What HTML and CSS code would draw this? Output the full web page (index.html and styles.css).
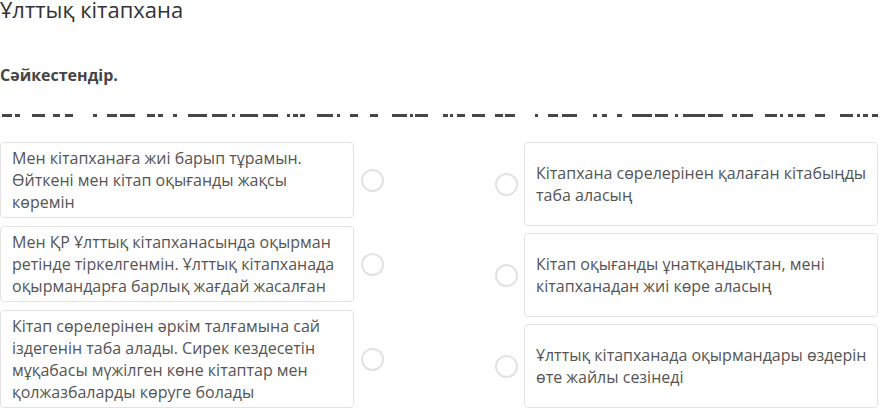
FILE: index.html
```html
<!DOCTYPE html>
<html lang="kk">
<head>
  <meta charset="UTF-8" />
  <meta name="viewport" content="width=device-width, initial-scale=1.0"/>
  <title>Ұлттық кітапхана</title>
  <link rel="stylesheet" href="styles.css">
</head>
<body>
  <h1 class="title">Ұлттық кітапхана</h1>
  <p class="prompt">Сәйкестендір.</p>

  <!-- Үзік сызық -->
  <div class="rule">
    <svg width="884" height="3" viewBox="0 0 884 3">
      <g fill="#464646">
        <rect x="2" y="0" width="10" height="3"/><rect x="15" y="0" width="5" height="3"/>
        <rect x="32" y="0" width="13" height="3"/><rect x="53" y="0" width="7" height="3"/>
        <rect x="65" y="0" width="8" height="3"/><rect x="93" y="0" width="4" height="3"/>
        <rect x="107" y="0" width="10" height="3"/><rect x="120" y="0" width="15" height="3"/>
        <rect x="147" y="0" width="3" height="3"/><rect x="150" y="0" width="5" height="3"/>
        <rect x="158" y="0" width="5" height="3"/><rect x="173" y="0" width="4" height="3"/>
        <rect x="188" y="0" width="19" height="3"/><rect x="212" y="0" width="15" height="3"/>
        <rect x="232" y="0" width="3" height="3"/><rect x="240" y="0" width="18" height="3"/>
        <rect x="263" y="0" width="15" height="3"/><rect x="287" y="0" width="3" height="3"/>
        <rect x="293" y="0" width="5" height="3"/><rect x="300" y="0" width="5" height="3"/>
        <rect x="317" y="0" width="16" height="3"/><rect x="337" y="0" width="3" height="3"/>
        <rect x="350" y="0" width="8" height="3"/><rect x="370" y="0" width="8" height="3"/>
        <rect x="392" y="0" width="15" height="3"/><rect x="410" y="0" width="3" height="3"/>
        <rect x="415" y="0" width="13" height="3"/><rect x="443" y="0" width="5" height="3"/>
        <rect x="450" y="0" width="3" height="3"/><rect x="457" y="0" width="8" height="3"/>
        <rect x="472" y="0" width="13" height="3"/><rect x="495" y="0" width="8" height="3"/>
        <rect x="505" y="0" width="10" height="3"/><rect x="535" y="0" width="3" height="3"/>
        <rect x="548" y="0" width="10" height="3"/><rect x="562" y="0" width="15" height="3"/>
        <rect x="593" y="0" width="4" height="3"/><rect x="602" y="0" width="5" height="3"/>
        <rect x="617" y="0" width="5" height="3"/><rect x="632" y="0" width="20" height="3"/>
        <rect x="655" y="0" width="13" height="3"/><rect x="675" y="0" width="3" height="3"/>
        <rect x="683" y="0" width="22" height="3"/><rect x="708" y="0" width="15" height="3"/>
        <rect x="732" y="0" width="5" height="3"/><rect x="740" y="0" width="13" height="3"/>
        <rect x="765" y="0" width="12" height="3"/><rect x="780" y="0" width="3" height="3"/>
        <rect x="788" y="0" width="5" height="3"/><rect x="797" y="0" width="8" height="3"/>
        <rect x="815" y="0" width="10" height="3"/><rect x="840" y="0" width="13" height="3"/>
        <rect x="857" y="0" width="3" height="3"/><rect x="863" y="0" width="5" height="3"/>
        <rect x="872" y="0" width="6" height="3"/>
      </g>
    </svg>
  </div>

  <!-- Сәйкестендіру -->
  <div class="match">
    <div class="col col-left">
      <div class="row">
        <div class="card">Мен кітапханаға жиі барып тұрамын. Өйткені мен кітап оқығанды жақсы көремін</div>
        <span class="radio"></span>
      </div>
      <div class="row">
        <div class="card">Мен ҚР Ұлттық кітапханасында оқырман ретінде тіркелгенмін. Ұлттық кітапханада оқырмандарға барлық жағдай жасалған</div>
        <span class="radio"></span>
      </div>
      <div class="row">
        <div class="card">Кітап сөрелерінен әркім талғамына сай іздегенін таба алады. Сирек кездесетін мұқабасы мүжілген көне кітаптар мен қолжазбаларды көруге болады</div>
        <span class="radio"></span>
      </div>
    </div>

    <div class="col col-right">
      <div class="row">
        <span class="radio"></span>
        <div class="card card-tall">Кітапхана сөрелерінен қалаған кітабыңды таба аласың</div>
      </div>
      <div class="row">
        <span class="radio"></span>
        <div class="card card-tall">Кітап оқығанды ұнатқандықтан, мені кітапханадан жиі көре аласың</div>
      </div>
      <div class="row">
        <span class="radio"></span>
        <div class="card card-tall">Ұлттық кітапханада оқырмандары өздерін өте жайлы сезінеді</div>
      </div>
    </div>
  </div>
</body>
</html>
```

FILE: styles.css
```css
body {
  font-family: 'Open Sans', sans-serif;
  margin: 0;
  background: #ffffff;
  color: #333;
  overflow: hidden;
}

.title {
  font-size: 22px;
  font-weight: normal;
  line-height: 18px;
  margin: 0;
  color: #333;
}

.prompt {
  font-size: 16px;
  font-weight: bold;
  line-height: 22px;
  margin: 46px 0 0 0;
  color: #444;
}

.rule {
  margin-top: 25px;
  height: 3px;
  line-height: 0;
}

.match {
  display: flex;
  justify-content: space-between;
  padding-right: 6px;
  margin-top: 28px;
}

.col {
  display: flex;
  flex-direction: column;
}

.col-left {
  width: 384px;
  gap: 8px;
}

.col-right {
  width: 383px;
  gap: 7px;
}

.row {
  display: flex;
  align-items: center;
}

.col-left .row {
  gap: 7px;
}

.col-right .row {
  gap: 6px;
}

.card {
  box-sizing: border-box;
  border: 1px solid #e3e3e3;
  border-radius: 4px;
  padding: 4px 11px;
  font-size: 16px;
  line-height: 22px;
  color: #555;
  background: #fff;
}

.col-left .card {
  width: 354px;
}

.card-tall {
  flex: 1;
  min-height: 84px;
  display: flex;
  align-items: center;
  padding-right: 2px;
}

.radio {
  box-sizing: border-box;
  width: 23px;
  height: 23px;
  border: 2px solid #e2e2e2;
  border-radius: 50%;
  flex-shrink: 0;
}
```
